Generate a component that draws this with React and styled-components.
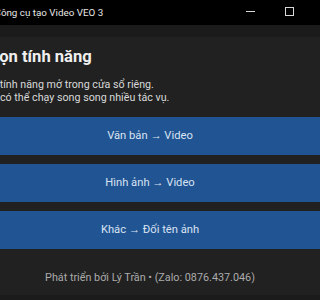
import React from "react";
import styled, { createGlobalStyle } from "styled-components";

const Global = createGlobalStyle`
  html, body { margin: 0; padding: 0; background: #212121; overflow: hidden; }
  body { font-family: Roboto, "Noto Sans", sans-serif; }
`;

const Window = styled.div`
  width: 396px;
  margin-left: -48px;
  height: 300px;
  display: flex;
  flex-direction: column;
  background: #212121;
`;

const TitleBar = styled.div`
  height: 25px;
  background: #000;
  display: flex;
  align-items: center;
  flex-shrink: 0;
`;

const Title = styled.div`
  flex: 1;
  padding-left: 42.5px;
  color: #e6e6e6;
  font-size: 9.8px;
  line-height: 24px;
  white-space: nowrap;
`;

const Controls = styled.div`
  display: flex;
  height: 25px;
`;

const Ctrl = styled.div`
  width: 39px;
  height: 25px;
  display: flex;
  align-items: center;
  justify-content: center;
`;

const MinLine = styled.div`
  width: 9px;
  height: 1px;
  background: #d8d8d8;
  margin-top: -3px;
`;

const MaxBox = styled.div`
  width: 7px;
  height: 7px;
  border: 1px solid #d8d8d8;
  margin-top: -2px;
`;

const Band = styled.div`
  height: 12px;
  background: #1b1b1b;
  flex-shrink: 0;
`;

const Content = styled.div`
  flex: 1;
  padding: 10px 27px 0;
  display: flex;
  flex-direction: column;
`;

const Heading = styled.h1`
  margin: 0;
  font-size: 16.6px;
  line-height: 20px;
  font-weight: 700;
  color: #efefef;
  white-space: nowrap;
`;

const Desc = styled.p`
  margin: 12.3px 0 0;
  font-size: 10.7px;
  line-height: 12.5px;
  color: #d9d9d9;
  white-space: nowrap;
`;

const Buttons = styled.div`
  margin-top: 12.7px;
  display: flex;
  flex-direction: column;
  gap: 9px;
`;

const FeatureButton = styled.button`
  height: 38px;
  border: none;
  border-radius: 0;
  background: #215493;
  color: #d8e3f2;
  font-family: inherit;
  font-size: 11.2px;
  cursor: pointer;
  padding: 0;
`;

const Footer = styled.div`
  margin-top: 21px;
  text-align: center;
  font-size: 10.8px;
  line-height: 16px;
  color: #ababab;
  white-space: nowrap;
`;

const BottomStrip = styled.div`
  height: 5px;
  background: #1b1b1b;
  flex-shrink: 0;
`;

export default function App() {
  return (
    <>
      <Global />
      <Window>
        <TitleBar>
          <Title>Công cụ tạo Video VEO 3</Title>
          <Controls>
            <Ctrl><MinLine /></Ctrl>
            <Ctrl><MaxBox /></Ctrl>
            <Ctrl />
          </Controls>
        </TitleBar>
        <Band />
        <Content>
          <Heading>Chọn tính năng</Heading>
          <Desc>
            Mỗi tính năng mở trong cửa sổ riêng.
            <br />
            Bạn có thể chạy song song nhiều tác vụ.
          </Desc>
          <Buttons>
            <FeatureButton>Văn bản → Video</FeatureButton>
            <FeatureButton>Hình ảnh → Video</FeatureButton>
            <FeatureButton>Khác → Đối tên ảnh</FeatureButton>
          </Buttons>
          <Footer>Phát triển bởi Lý Trần • (Zalo: 0876.437.046)</Footer>
        </Content>
        <BottomStrip />
      </Window>
    </>
  );
}
